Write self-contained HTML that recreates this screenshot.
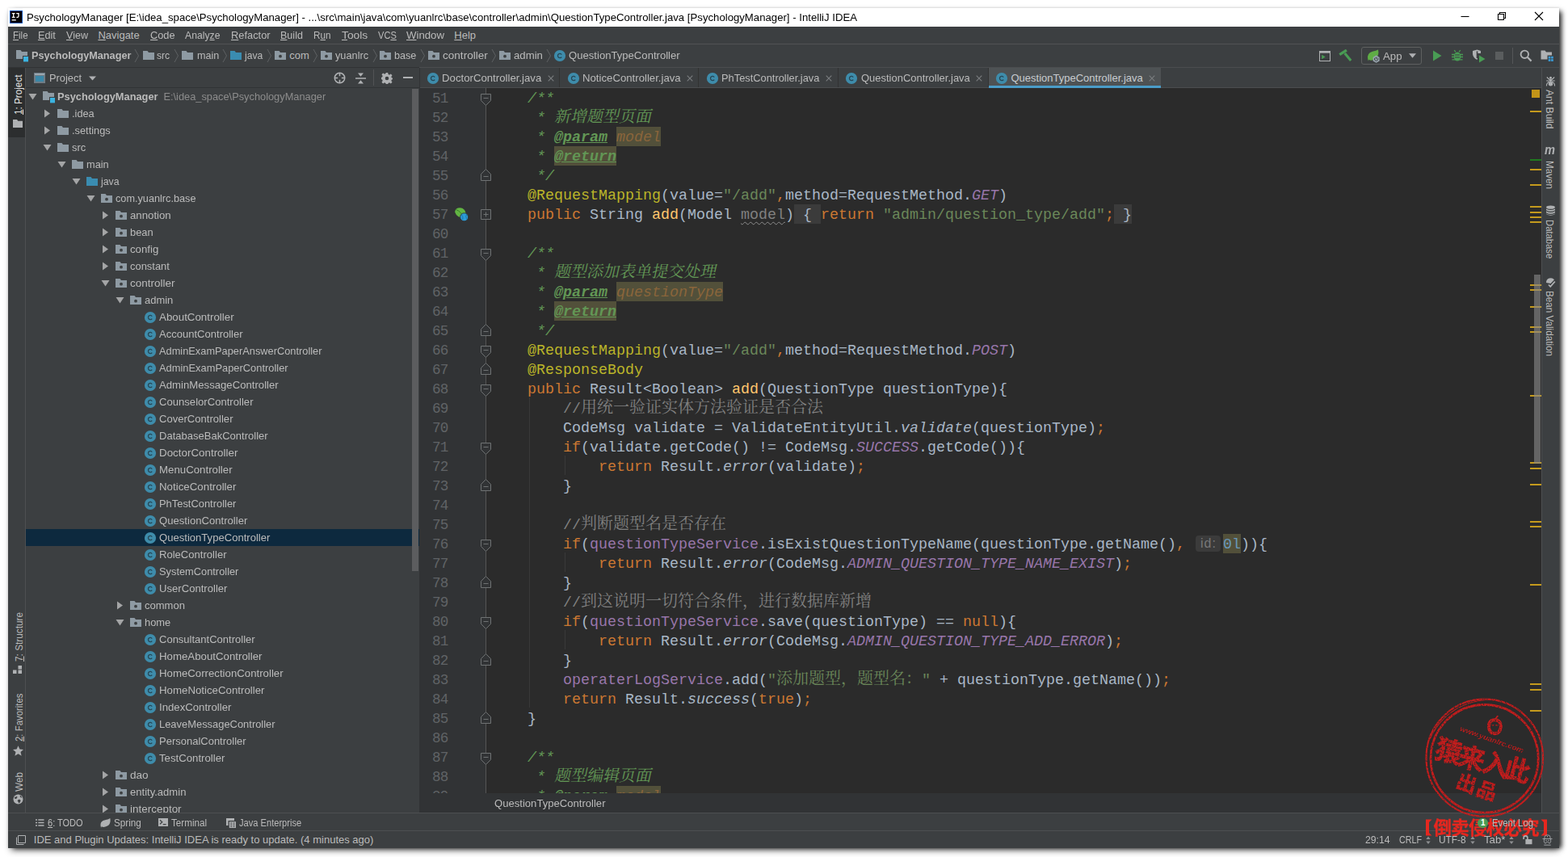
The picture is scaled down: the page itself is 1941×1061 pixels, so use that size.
<!DOCTYPE html>
<html><head><meta charset="utf-8"><title>IntelliJ IDEA</title>
<style>
*{box-sizing:border-box;margin:0;padding:0}
html,body{width:1941px;height:1061px;overflow:hidden;background:#fff}
body{font-family:"Liberation Sans",sans-serif;font-size:13px;color:#BBBBBB;position:relative}
.abs{position:absolute}
.t{position:absolute;white-space:pre;transform-origin:0 50%}
.t u{text-decoration:underline;text-underline-offset:.8px;text-decoration-thickness:1px}
#shadow{position:absolute;left:10px;top:10px;width:1920px;height:1040px;box-shadow:5px 2px 6px -2px rgba(0,0,0,.8),1px 5px 8px -2px rgba(0,0,0,.45),0 0 3px 0 rgba(0,0,0,.12)}
#win{position:absolute;left:10px;top:10px;width:1920px;height:1040px;background:#3C3F41;overflow:hidden}
#pg{position:absolute;left:-10px;top:-10px;width:1941px;height:1061px}
#title{position:absolute;left:10px;top:10px;width:1920px;height:23px;background:#fff}
.hl{position:absolute;height:1px}
.vl{position:absolute;width:1px}
/* project panel */
#tree{position:absolute;left:32px;top:109px;width:487px;height:897px;overflow:hidden}
.tr{position:absolute;left:0;width:487px;height:21px;line-height:21px;white-space:nowrap}
.tr.sel{background:#0D293E}
.tr .arw{position:absolute;top:5px;line-height:0}
.tr .tic{position:absolute;top:3px;line-height:0}
.tr .tl{position:absolute;top:0;font-size:13px;color:#BBBBBB;transform-origin:0 50%}
.tr .tl b{font-weight:bold}
.tr .pth{color:#8C8C8C;margin-left:7px}
/* editor */
#edbg{position:absolute;left:519px;top:109px;width:1389px;height:873px;background:#2B2B2B}
#gutter{position:absolute;left:519px;top:109px;width:83px;height:873px;background:#313335;border-right:1px solid #555555;overflow:hidden}
#code{position:absolute;left:602px;top:109px;width:1292px;height:873px;overflow:hidden}
.cl,.ln{position:absolute;left:0;height:24px;line-height:27.5px;font-family:"Liberation Mono",monospace;font-size:18.333px;white-space:pre}
.ln{font-size:17.6px;letter-spacing:-.7px;line-height:26px}
.cl{left:7px;color:#A9B7C6}
.ln{left:16px;color:#606366}
#folds{position:absolute;left:519px;top:109px;width:100px;height:873px;overflow:hidden}
.fm{position:absolute;left:76px;line-height:0}
.cj{vertical-align:top}
.cj text{font-family:"Liberation Mono","Noto Serif CJK SC",serif;font-size:20px;font-style:normal;letter-spacing:0}
.d{color:#A9B7C6}.k{color:#CC7832}.a{color:#BBB529}.s{color:#6A8759}.f{color:#9876AA;font-style:italic}.fi{color:#9876AA}
.m{color:#FFC66D}.sm{font-style:italic;color:#A9B7C6}.c{color:#808080}.dc{color:#629755;font-style:italic}
.dt{color:#629755;font-style:italic;font-weight:bold;text-decoration:underline}
.dp{color:#8A653B;font-style:italic;background:#52503A;padding:3.2px 0 0}
.hl1{background:#52503A;padding:3.2px 0 0}.hl2{background:#52503A;padding:3.2px 0 0}
.n{color:#6897BB}
.un{color:#808080;text-decoration:underline wavy #8C8C8C 1px;text-underline-offset:3px}
.fo{background:#3B3B3B;color:#A9B7C6;padding:3.2px 0 0}
.hint{display:inline-block;font-family:"Liberation Sans",sans-serif;font-size:16px;color:#787878;background:#3B3B3B;border-radius:4px;height:20px;line-height:20px;width:31px;margin:2px 3px 0 2px;text-align:center;vertical-align:top;letter-spacing:1px;text-indent:1px}
</style></head>
<body>
<div id="shadow"></div>
<div id="win"><div id="pg">
  <div id="title"></div>
  <!-- separators -->
  <div class="hl" style="left:10px;top:54px;width:1920px;background:#515355"></div>
  <div class="hl" style="left:10px;top:83px;width:509px;background:#313335"></div>
  <div class="hl" style="left:519px;top:83px;width:1411px;background:#4B4D4F"></div>
  <div class="hl" style="left:32px;top:108px;width:487px;background:#313335"></div>
  <div class="hl" style="left:519px;top:108px;width:1389px;background:#4B4D4F"></div>
  <div class="hl" style="left:10px;top:1006px;width:1920px;background:#4D4F51"></div>
  <div class="hl" style="left:10px;top:1028px;width:1920px;background:#4D4F51"></div>
  <div class="vl" style="left:31px;top:84px;height:922px;background:#4D4F51"></div>
  <div class="vl" style="left:1908px;top:84px;height:922px;background:#4D4F51"></div>
  <div id="tree">
<div class="tr" style="top:0px"><span class="arw" style="left:2.5px"><svg class="ta" width="11" height="11" viewBox="0 0 11 11"><path d="M0.5 2H10.5L5.5 9.5Z" fill="#A4A5A6"/></svg></span><span class="tic" style="left:20px"><svg class="ti" width="16" height="16" viewBox="0 0 16 16"><path d="M1 1H6.5L8 3H15V8H9V12H1Z" fill="#8E9AA3"/><rect x="10" y="9" width="6.4" height="6.4" fill="#3BB3E0"/></svg></span><span class="tl" style="left:39px;transform:scaleX(0.9850)"><b>PsychologyManager</b><span class="pth">E:\idea_space\PsychologyManager</span></span></div>
<div class="tr" style="top:21px"><span class="arw" style="left:20.5px"><svg class="ta" width="11" height="11" viewBox="0 0 11 11"><path d="M2 0.5L9 5.5L2 10.5Z" fill="#A4A5A6"/></svg></span><span class="tic" style="left:38px"><svg class="ti" width="16" height="16" viewBox="0 0 16 16"><path d="M1 2H6.5L8 4H15V13H1Z" fill="#8E9AA3"/></svg></span><span class="tl" style="left:57px;transform:scaleX(0.9822)">.idea</span></div>
<div class="tr" style="top:42px"><span class="arw" style="left:20.5px"><svg class="ta" width="11" height="11" viewBox="0 0 11 11"><path d="M2 0.5L9 5.5L2 10.5Z" fill="#A4A5A6"/></svg></span><span class="tic" style="left:38px"><svg class="ti" width="16" height="16" viewBox="0 0 16 16"><path d="M1 2H6.5L8 4H15V13H1Z" fill="#8E9AA3"/></svg></span><span class="tl" style="left:57px;transform:scaleX(0.9851)">.settings</span></div>
<div class="tr" style="top:63px"><span class="arw" style="left:20.5px"><svg class="ta" width="11" height="11" viewBox="0 0 11 11"><path d="M0.5 2H10.5L5.5 9.5Z" fill="#A4A5A6"/></svg></span><span class="tic" style="left:38px"><svg class="ti" width="16" height="16" viewBox="0 0 16 16"><path d="M1 2H6.5L8 4H15V13H1Z" fill="#8E9AA3"/></svg></span><span class="tl" style="left:57px;transform:scaleX(0.9917)">src</span></div>
<div class="tr" style="top:84px"><span class="arw" style="left:38.5px"><svg class="ta" width="11" height="11" viewBox="0 0 11 11"><path d="M0.5 2H10.5L5.5 9.5Z" fill="#A4A5A6"/></svg></span><span class="tic" style="left:56px"><svg class="ti" width="16" height="16" viewBox="0 0 16 16"><path d="M1 2H6.5L8 4H15V13H1Z" fill="#8E9AA3"/></svg></span><span class="tl" style="left:75px;transform:scaleX(0.9827)">main</span></div>
<div class="tr" style="top:105px"><span class="arw" style="left:56.5px"><svg class="ta" width="11" height="11" viewBox="0 0 11 11"><path d="M0.5 2H10.5L5.5 9.5Z" fill="#A4A5A6"/></svg></span><span class="tic" style="left:74px"><svg class="ti" width="16" height="16" viewBox="0 0 16 16"><path d="M1 2H6.5L8 4H15V13H1Z" fill="#3A8CB0"/></svg></span><span class="tl" style="left:93px;transform:scaleX(0.9472)">java</span></div>
<div class="tr" style="top:126px"><span class="arw" style="left:74.5px"><svg class="ta" width="11" height="11" viewBox="0 0 11 11"><path d="M0.5 2H10.5L5.5 9.5Z" fill="#A4A5A6"/></svg></span><span class="tic" style="left:92px"><svg class="ti" width="16" height="16" viewBox="0 0 16 16"><path d="M1 2H6.5L8 4H15V13H1Z" fill="#8E9AA3"/><circle cx="8" cy="8.7" r="1.9" fill="#3C3F41"/></svg></span><span class="tl" style="left:111px;transform:scaleX(0.9765)">com.yuanlrc.base</span></div>
<div class="tr" style="top:147px"><span class="arw" style="left:92.5px"><svg class="ta" width="11" height="11" viewBox="0 0 11 11"><path d="M2 0.5L9 5.5L2 10.5Z" fill="#A4A5A6"/></svg></span><span class="tic" style="left:110px"><svg class="ti" width="16" height="16" viewBox="0 0 16 16"><path d="M1 2H6.5L8 4H15V13H1Z" fill="#8E9AA3"/><circle cx="8" cy="8.7" r="1.9" fill="#3C3F41"/></svg></span><span class="tl" style="left:129px;transform:scaleX(1.0162)">annotion</span></div>
<div class="tr" style="top:168px"><span class="arw" style="left:92.5px"><svg class="ta" width="11" height="11" viewBox="0 0 11 11"><path d="M2 0.5L9 5.5L2 10.5Z" fill="#A4A5A6"/></svg></span><span class="tic" style="left:110px"><svg class="ti" width="16" height="16" viewBox="0 0 16 16"><path d="M1 2H6.5L8 4H15V13H1Z" fill="#8E9AA3"/><circle cx="8" cy="8.7" r="1.9" fill="#3C3F41"/></svg></span><span class="tl" style="left:129px;transform:scaleX(0.9923)">bean</span></div>
<div class="tr" style="top:189px"><span class="arw" style="left:92.5px"><svg class="ta" width="11" height="11" viewBox="0 0 11 11"><path d="M2 0.5L9 5.5L2 10.5Z" fill="#A4A5A6"/></svg></span><span class="tic" style="left:110px"><svg class="ti" width="16" height="16" viewBox="0 0 16 16"><path d="M1 2H6.5L8 4H15V13H1Z" fill="#8E9AA3"/><circle cx="8" cy="8.7" r="1.9" fill="#3C3F41"/></svg></span><span class="tl" style="left:129px;transform:scaleX(1.0172)">config</span></div>
<div class="tr" style="top:210px"><span class="arw" style="left:92.5px"><svg class="ta" width="11" height="11" viewBox="0 0 11 11"><path d="M2 0.5L9 5.5L2 10.5Z" fill="#A4A5A6"/></svg></span><span class="tic" style="left:110px"><svg class="ti" width="16" height="16" viewBox="0 0 16 16"><path d="M1 2H6.5L8 4H15V13H1Z" fill="#8E9AA3"/><circle cx="8" cy="8.7" r="1.9" fill="#3C3F41"/></svg></span><span class="tl" style="left:129px;transform:scaleX(0.9948)">constant</span></div>
<div class="tr" style="top:231px"><span class="arw" style="left:92.5px"><svg class="ta" width="11" height="11" viewBox="0 0 11 11"><path d="M0.5 2H10.5L5.5 9.5Z" fill="#A4A5A6"/></svg></span><span class="tic" style="left:110px"><svg class="ti" width="16" height="16" viewBox="0 0 16 16"><path d="M1 2H6.5L8 4H15V13H1Z" fill="#8E9AA3"/><circle cx="8" cy="8.7" r="1.9" fill="#3C3F41"/></svg></span><span class="tl" style="left:129px;transform:scaleX(1.0380)">controller</span></div>
<div class="tr" style="top:252px"><span class="arw" style="left:110.5px"><svg class="ta" width="11" height="11" viewBox="0 0 11 11"><path d="M0.5 2H10.5L5.5 9.5Z" fill="#A4A5A6"/></svg></span><span class="tic" style="left:128px"><svg class="ti" width="16" height="16" viewBox="0 0 16 16"><path d="M1 2H6.5L8 4H15V13H1Z" fill="#8E9AA3"/><circle cx="8" cy="8.7" r="1.9" fill="#3C3F41"/></svg></span><span class="tl" style="left:147px;transform:scaleX(0.9966)">admin</span></div>
<div class="tr" style="top:273px"><span class="tic" style="left:146px"><svg class="ti" width="16" height="16" viewBox="0 0 16 16"><circle cx="8" cy="8" r="7.1" fill="#3E8CAB"/><path d="M10.2 9.5A2.6 2.6 0 1 1 10.2 6.5" fill="none" stroke="#274756" stroke-width="1.3"/></svg></span><span class="tl" style="left:165px;transform:scaleX(1.0252)">AboutController</span></div>
<div class="tr" style="top:294px"><span class="tic" style="left:146px"><svg class="ti" width="16" height="16" viewBox="0 0 16 16"><circle cx="8" cy="8" r="7.1" fill="#3E8CAB"/><path d="M10.2 9.5A2.6 2.6 0 1 1 10.2 6.5" fill="none" stroke="#274756" stroke-width="1.3"/></svg></span><span class="tl" style="left:165px;transform:scaleX(1.0026)">AccountController</span></div>
<div class="tr" style="top:315px"><span class="tic" style="left:146px"><svg class="ti" width="16" height="16" viewBox="0 0 16 16"><circle cx="8" cy="8" r="7.1" fill="#3E8CAB"/><path d="M10.2 9.5A2.6 2.6 0 1 1 10.2 6.5" fill="none" stroke="#274756" stroke-width="1.3"/></svg></span><span class="tl" style="left:165px;transform:scaleX(0.9854)">AdminExamPaperAnswerController</span></div>
<div class="tr" style="top:336px"><span class="tic" style="left:146px"><svg class="ti" width="16" height="16" viewBox="0 0 16 16"><circle cx="8" cy="8" r="7.1" fill="#3E8CAB"/><path d="M10.2 9.5A2.6 2.6 0 1 1 10.2 6.5" fill="none" stroke="#274756" stroke-width="1.3"/></svg></span><span class="tl" style="left:165px;transform:scaleX(0.9905)">AdminExamPaperController</span></div>
<div class="tr" style="top:357px"><span class="tic" style="left:146px"><svg class="ti" width="16" height="16" viewBox="0 0 16 16"><circle cx="8" cy="8" r="7.1" fill="#3E8CAB"/><path d="M10.2 9.5A2.6 2.6 0 1 1 10.2 6.5" fill="none" stroke="#274756" stroke-width="1.3"/></svg></span><span class="tl" style="left:165px;transform:scaleX(1.0120)">AdminMessageController</span></div>
<div class="tr" style="top:378px"><span class="tic" style="left:146px"><svg class="ti" width="16" height="16" viewBox="0 0 16 16"><circle cx="8" cy="8" r="7.1" fill="#3E8CAB"/><path d="M10.2 9.5A2.6 2.6 0 1 1 10.2 6.5" fill="none" stroke="#274756" stroke-width="1.3"/></svg></span><span class="tl" style="left:165px;transform:scaleX(1.0076)">CounselorController</span></div>
<div class="tr" style="top:399px"><span class="tic" style="left:146px"><svg class="ti" width="16" height="16" viewBox="0 0 16 16"><circle cx="8" cy="8" r="7.1" fill="#3E8CAB"/><path d="M10.2 9.5A2.6 2.6 0 1 1 10.2 6.5" fill="none" stroke="#274756" stroke-width="1.3"/></svg></span><span class="tl" style="left:165px;transform:scaleX(1.0050)">CoverController</span></div>
<div class="tr" style="top:420px"><span class="tic" style="left:146px"><svg class="ti" width="16" height="16" viewBox="0 0 16 16"><circle cx="8" cy="8" r="7.1" fill="#3E8CAB"/><path d="M10.2 9.5A2.6 2.6 0 1 1 10.2 6.5" fill="none" stroke="#274756" stroke-width="1.3"/></svg></span><span class="tl" style="left:165px;transform:scaleX(1.0014)">DatabaseBakController</span></div>
<div class="tr" style="top:441px"><span class="tic" style="left:146px"><svg class="ti" width="16" height="16" viewBox="0 0 16 16"><circle cx="8" cy="8" r="7.1" fill="#3E8CAB"/><path d="M10.2 9.5A2.6 2.6 0 1 1 10.2 6.5" fill="none" stroke="#274756" stroke-width="1.3"/></svg></span><span class="tl" style="left:165px;transform:scaleX(1.0290)">DoctorController</span></div>
<div class="tr" style="top:462px"><span class="tic" style="left:146px"><svg class="ti" width="16" height="16" viewBox="0 0 16 16"><circle cx="8" cy="8" r="7.1" fill="#3E8CAB"/><path d="M10.2 9.5A2.6 2.6 0 1 1 10.2 6.5" fill="none" stroke="#274756" stroke-width="1.3"/></svg></span><span class="tl" style="left:165px;transform:scaleX(1.0194)">MenuController</span></div>
<div class="tr" style="top:483px"><span class="tic" style="left:146px"><svg class="ti" width="16" height="16" viewBox="0 0 16 16"><circle cx="8" cy="8" r="7.1" fill="#3E8CAB"/><path d="M10.2 9.5A2.6 2.6 0 1 1 10.2 6.5" fill="none" stroke="#274756" stroke-width="1.3"/></svg></span><span class="tl" style="left:165px;transform:scaleX(1.0236)">NoticeController</span></div>
<div class="tr" style="top:504px"><span class="tic" style="left:146px"><svg class="ti" width="16" height="16" viewBox="0 0 16 16"><circle cx="8" cy="8" r="7.1" fill="#3E8CAB"/><path d="M10.2 9.5A2.6 2.6 0 1 1 10.2 6.5" fill="none" stroke="#274756" stroke-width="1.3"/></svg></span><span class="tl" style="left:165px;transform:scaleX(0.9926)">PhTestController</span></div>
<div class="tr" style="top:525px"><span class="tic" style="left:146px"><svg class="ti" width="16" height="16" viewBox="0 0 16 16"><circle cx="8" cy="8" r="7.1" fill="#3E8CAB"/><path d="M10.2 9.5A2.6 2.6 0 1 1 10.2 6.5" fill="none" stroke="#274756" stroke-width="1.3"/></svg></span><span class="tl" style="left:165px;transform:scaleX(1.0084)">QuestionController</span></div>
<div class="tr sel" style="top:546px"><span class="tic" style="left:146px"><svg class="ti" width="16" height="16" viewBox="0 0 16 16"><circle cx="8" cy="8" r="7.1" fill="#3E8CAB"/><path d="M10.2 9.5A2.6 2.6 0 1 1 10.2 6.5" fill="none" stroke="#274756" stroke-width="1.3"/></svg></span><span class="tl" style="left:165px;transform:scaleX(1.0060)">QuestionTypeController</span></div>
<div class="tr" style="top:567px"><span class="tic" style="left:146px"><svg class="ti" width="16" height="16" viewBox="0 0 16 16"><circle cx="8" cy="8" r="7.1" fill="#3E8CAB"/><path d="M10.2 9.5A2.6 2.6 0 1 1 10.2 6.5" fill="none" stroke="#274756" stroke-width="1.3"/></svg></span><span class="tl" style="left:165px;transform:scaleX(1.0049)">RoleController</span></div>
<div class="tr" style="top:588px"><span class="tic" style="left:146px"><svg class="ti" width="16" height="16" viewBox="0 0 16 16"><circle cx="8" cy="8" r="7.1" fill="#3E8CAB"/><path d="M10.2 9.5A2.6 2.6 0 1 1 10.2 6.5" fill="none" stroke="#274756" stroke-width="1.3"/></svg></span><span class="tl" style="left:165px;transform:scaleX(0.9869)">SystemController</span></div>
<div class="tr" style="top:609px"><span class="tic" style="left:146px"><svg class="ti" width="16" height="16" viewBox="0 0 16 16"><circle cx="8" cy="8" r="7.1" fill="#3E8CAB"/><path d="M10.2 9.5A2.6 2.6 0 1 1 10.2 6.5" fill="none" stroke="#274756" stroke-width="1.3"/></svg></span><span class="tl" style="left:165px;transform:scaleX(1.0082)">UserController</span></div>
<div class="tr" style="top:630px"><span class="arw" style="left:110.5px"><svg class="ta" width="11" height="11" viewBox="0 0 11 11"><path d="M2 0.5L9 5.5L2 10.5Z" fill="#A4A5A6"/></svg></span><span class="tic" style="left:128px"><svg class="ti" width="16" height="16" viewBox="0 0 16 16"><path d="M1 2H6.5L8 4H15V13H1Z" fill="#8E9AA3"/><circle cx="8" cy="8.7" r="1.9" fill="#3C3F41"/></svg></span><span class="tl" style="left:147px;transform:scaleX(1.0008)">common</span></div>
<div class="tr" style="top:651px"><span class="arw" style="left:110.5px"><svg class="ta" width="11" height="11" viewBox="0 0 11 11"><path d="M0.5 2H10.5L5.5 9.5Z" fill="#A4A5A6"/></svg></span><span class="tic" style="left:128px"><svg class="ti" width="16" height="16" viewBox="0 0 16 16"><path d="M1 2H6.5L8 4H15V13H1Z" fill="#8E9AA3"/><circle cx="8" cy="8.7" r="1.9" fill="#3C3F41"/></svg></span><span class="tl" style="left:147px;transform:scaleX(0.9898)">home</span></div>
<div class="tr" style="top:672px"><span class="tic" style="left:146px"><svg class="ti" width="16" height="16" viewBox="0 0 16 16"><circle cx="8" cy="8" r="7.1" fill="#3E8CAB"/><path d="M10.2 9.5A2.6 2.6 0 1 1 10.2 6.5" fill="none" stroke="#274756" stroke-width="1.3"/></svg></span><span class="tl" style="left:165px;transform:scaleX(1.0007)">ConsultantController</span></div>
<div class="tr" style="top:693px"><span class="tic" style="left:146px"><svg class="ti" width="16" height="16" viewBox="0 0 16 16"><circle cx="8" cy="8" r="7.1" fill="#3E8CAB"/><path d="M10.2 9.5A2.6 2.6 0 1 1 10.2 6.5" fill="none" stroke="#274756" stroke-width="1.3"/></svg></span><span class="tl" style="left:165px;transform:scaleX(1.0199)">HomeAboutController</span></div>
<div class="tr" style="top:714px"><span class="tic" style="left:146px"><svg class="ti" width="16" height="16" viewBox="0 0 16 16"><circle cx="8" cy="8" r="7.1" fill="#3E8CAB"/><path d="M10.2 9.5A2.6 2.6 0 1 1 10.2 6.5" fill="none" stroke="#274756" stroke-width="1.3"/></svg></span><span class="tl" style="left:165px;transform:scaleX(1.0172)">HomeCorrectionController</span></div>
<div class="tr" style="top:735px"><span class="tic" style="left:146px"><svg class="ti" width="16" height="16" viewBox="0 0 16 16"><circle cx="8" cy="8" r="7.1" fill="#3E8CAB"/><path d="M10.2 9.5A2.6 2.6 0 1 1 10.2 6.5" fill="none" stroke="#274756" stroke-width="1.3"/></svg></span><span class="tl" style="left:165px;transform:scaleX(1.0204)">HomeNoticeController</span></div>
<div class="tr" style="top:756px"><span class="tic" style="left:146px"><svg class="ti" width="16" height="16" viewBox="0 0 16 16"><circle cx="8" cy="8" r="7.1" fill="#3E8CAB"/><path d="M10.2 9.5A2.6 2.6 0 1 1 10.2 6.5" fill="none" stroke="#274756" stroke-width="1.3"/></svg></span><span class="tl" style="left:165px;transform:scaleX(1.0141)">IndexController</span></div>
<div class="tr" style="top:777px"><span class="tic" style="left:146px"><svg class="ti" width="16" height="16" viewBox="0 0 16 16"><circle cx="8" cy="8" r="7.1" fill="#3E8CAB"/><path d="M10.2 9.5A2.6 2.6 0 1 1 10.2 6.5" fill="none" stroke="#274756" stroke-width="1.3"/></svg></span><span class="tl" style="left:165px;transform:scaleX(0.9936)">LeaveMessageController</span></div>
<div class="tr" style="top:798px"><span class="tic" style="left:146px"><svg class="ti" width="16" height="16" viewBox="0 0 16 16"><circle cx="8" cy="8" r="7.1" fill="#3E8CAB"/><path d="M10.2 9.5A2.6 2.6 0 1 1 10.2 6.5" fill="none" stroke="#274756" stroke-width="1.3"/></svg></span><span class="tl" style="left:165px;transform:scaleX(0.9993)">PersonalController</span></div>
<div class="tr" style="top:819px"><span class="tic" style="left:146px"><svg class="ti" width="16" height="16" viewBox="0 0 16 16"><circle cx="8" cy="8" r="7.1" fill="#3E8CAB"/><path d="M10.2 9.5A2.6 2.6 0 1 1 10.2 6.5" fill="none" stroke="#274756" stroke-width="1.3"/></svg></span><span class="tl" style="left:165px;transform:scaleX(1.0149)">TestController</span></div>
<div class="tr" style="top:840px"><span class="arw" style="left:92.5px"><svg class="ta" width="11" height="11" viewBox="0 0 11 11"><path d="M2 0.5L9 5.5L2 10.5Z" fill="#A4A5A6"/></svg></span><span class="tic" style="left:110px"><svg class="ti" width="16" height="16" viewBox="0 0 16 16"><path d="M1 2H6.5L8 4H15V13H1Z" fill="#8E9AA3"/><circle cx="8" cy="8.7" r="1.9" fill="#3C3F41"/></svg></span><span class="tl" style="left:129px;transform:scaleX(1.0459)">dao</span></div>
<div class="tr" style="top:861px"><span class="arw" style="left:92.5px"><svg class="ta" width="11" height="11" viewBox="0 0 11 11"><path d="M2 0.5L9 5.5L2 10.5Z" fill="#A4A5A6"/></svg></span><span class="tic" style="left:110px"><svg class="ti" width="16" height="16" viewBox="0 0 16 16"><path d="M1 2H6.5L8 4H15V13H1Z" fill="#8E9AA3"/><circle cx="8" cy="8.7" r="1.9" fill="#3C3F41"/></svg></span><span class="tl" style="left:129px;transform:scaleX(1.0038)">entity.admin</span></div>
<div class="tr" style="top:882px"><span class="arw" style="left:92.5px"><svg class="ta" width="11" height="11" viewBox="0 0 11 11"><path d="M2 0.5L9 5.5L2 10.5Z" fill="#A4A5A6"/></svg></span><span class="tic" style="left:110px"><svg class="ti" width="16" height="16" viewBox="0 0 16 16"><path d="M1 2H6.5L8 4H15V13H1Z" fill="#8E9AA3"/><circle cx="8" cy="8.7" r="1.9" fill="#3C3F41"/></svg></span><span class="tl" style="left:129px;transform:scaleX(1.0355)">interceptor</span></div>
  </div>
  <div class="abs" style="left:510px;top:110px;width:8px;height:597px;background:#5C5D5F"></div>
  <div id="edbg"></div>
  <div class="vl" style="left:519px;top:84px;height:25px;background:#313335"></div>
  <div id="gutter">
<div class="ln" style="top:0px">51</div>
<div class="ln" style="top:24px">52</div>
<div class="ln" style="top:48px">53</div>
<div class="ln" style="top:72px">54</div>
<div class="ln" style="top:96px">55</div>
<div class="ln" style="top:120px">56</div>
<div class="ln" style="top:144px">57</div>
<div class="ln" style="top:168px">60</div>
<div class="ln" style="top:192px">61</div>
<div class="ln" style="top:216px">62</div>
<div class="ln" style="top:240px">63</div>
<div class="ln" style="top:264px">64</div>
<div class="ln" style="top:288px">65</div>
<div class="ln" style="top:312px">66</div>
<div class="ln" style="top:336px">67</div>
<div class="ln" style="top:360px">68</div>
<div class="ln" style="top:384px">69</div>
<div class="ln" style="top:408px">70</div>
<div class="ln" style="top:432px">71</div>
<div class="ln" style="top:456px">72</div>
<div class="ln" style="top:480px">73</div>
<div class="ln" style="top:504px">74</div>
<div class="ln" style="top:528px">75</div>
<div class="ln" style="top:552px">76</div>
<div class="ln" style="top:576px">77</div>
<div class="ln" style="top:600px">78</div>
<div class="ln" style="top:624px">79</div>
<div class="ln" style="top:648px">80</div>
<div class="ln" style="top:672px">81</div>
<div class="ln" style="top:696px">82</div>
<div class="ln" style="top:720px">83</div>
<div class="ln" style="top:744px">84</div>
<div class="ln" style="top:768px">85</div>
<div class="ln" style="top:792px">86</div>
<div class="ln" style="top:816px">87</div>
<div class="ln" style="top:840px">88</div>
<div class="ln" style="top:864px">89</div>
<svg class="abs" style="left:43px;top:147px" width="19" height="19" viewBox="0 0 19 19"><path d="M1.2 6.2Q1.5 1.2 7.5 1.2Q13.6 1.6 14.6 8Q14.8 12.5 10.5 13Q3 13.5 1.2 6.2Z" fill="#62B543"/><path d="M2.5 3.5Q8.5 5.5 11.5 12.8" stroke="#3A7A2A" stroke-width="1" fill="none"/><circle cx="12.6" cy="12.8" r="5" fill="#2B9CD8" stroke="#313335" stroke-width=".9"/><path d="M9.4 9.8Q11.6 12 10.8 16M15.6 9.2Q13.6 12.2 16.2 15.6" stroke="#1D6FA0" stroke-width=".9" fill="none"/></svg>
  </div>
  <div id="folds">
<div class="fm" style="top:6.5px"><svg width="13" height="15" viewBox="0 0 13 15"><path d="M0.5 0.5H12.5V8.5L6.5 14.5L0.5 8.5Z" fill="#313335" stroke="#6F7273"/><path d="M3.5 5.5H9.5" stroke="#6F7273"/></svg></div>
<div class="fm" style="top:100px"><svg width="13" height="15" viewBox="0 0 13 15"><path d="M0.5 14.5H12.5V6.5L6.5 0.5L0.5 6.5Z" fill="#313335" stroke="#6F7273"/><path d="M3.5 9.5H9.5" stroke="#6F7273"/></svg></div>
<div class="fm" style="top:150px"><svg width="13" height="13" viewBox="0 0 13 13"><path d="M0.5 0.5H12.5V12.5H0.5Z" fill="#313335" stroke="#6F7273"/><path d="M3.5 6.5H9.5M6.5 3.5V9.5" stroke="#6F7273"/></svg></div>
<div class="fm" style="top:198.5px"><svg width="13" height="15" viewBox="0 0 13 15"><path d="M0.5 0.5H12.5V8.5L6.5 14.5L0.5 8.5Z" fill="#313335" stroke="#6F7273"/><path d="M3.5 5.5H9.5" stroke="#6F7273"/></svg></div>
<div class="fm" style="top:292px"><svg width="13" height="15" viewBox="0 0 13 15"><path d="M0.5 14.5H12.5V6.5L6.5 0.5L0.5 6.5Z" fill="#313335" stroke="#6F7273"/><path d="M3.5 9.5H9.5" stroke="#6F7273"/></svg></div>
<div class="fm" style="top:318.5px"><svg width="13" height="15" viewBox="0 0 13 15"><path d="M0.5 0.5H12.5V8.5L6.5 14.5L0.5 8.5Z" fill="#313335" stroke="#6F7273"/><path d="M3.5 5.5H9.5" stroke="#6F7273"/></svg></div>
<div class="fm" style="top:340px"><svg width="13" height="15" viewBox="0 0 13 15"><path d="M0.5 14.5H12.5V6.5L6.5 0.5L0.5 6.5Z" fill="#313335" stroke="#6F7273"/><path d="M3.5 9.5H9.5" stroke="#6F7273"/></svg></div>
<div class="fm" style="top:366.5px"><svg width="13" height="15" viewBox="0 0 13 15"><path d="M0.5 0.5H12.5V8.5L6.5 14.5L0.5 8.5Z" fill="#313335" stroke="#6F7273"/><path d="M3.5 5.5H9.5" stroke="#6F7273"/></svg></div>
<div class="fm" style="top:438.5px"><svg width="13" height="15" viewBox="0 0 13 15"><path d="M0.5 0.5H12.5V8.5L6.5 14.5L0.5 8.5Z" fill="#313335" stroke="#6F7273"/><path d="M3.5 5.5H9.5" stroke="#6F7273"/></svg></div>
<div class="fm" style="top:484px"><svg width="13" height="15" viewBox="0 0 13 15"><path d="M0.5 14.5H12.5V6.5L6.5 0.5L0.5 6.5Z" fill="#313335" stroke="#6F7273"/><path d="M3.5 9.5H9.5" stroke="#6F7273"/></svg></div>
<div class="fm" style="top:558.5px"><svg width="13" height="15" viewBox="0 0 13 15"><path d="M0.5 0.5H12.5V8.5L6.5 14.5L0.5 8.5Z" fill="#313335" stroke="#6F7273"/><path d="M3.5 5.5H9.5" stroke="#6F7273"/></svg></div>
<div class="fm" style="top:604px"><svg width="13" height="15" viewBox="0 0 13 15"><path d="M0.5 14.5H12.5V6.5L6.5 0.5L0.5 6.5Z" fill="#313335" stroke="#6F7273"/><path d="M3.5 9.5H9.5" stroke="#6F7273"/></svg></div>
<div class="fm" style="top:654.5px"><svg width="13" height="15" viewBox="0 0 13 15"><path d="M0.5 0.5H12.5V8.5L6.5 14.5L0.5 8.5Z" fill="#313335" stroke="#6F7273"/><path d="M3.5 5.5H9.5" stroke="#6F7273"/></svg></div>
<div class="fm" style="top:700px"><svg width="13" height="15" viewBox="0 0 13 15"><path d="M0.5 14.5H12.5V6.5L6.5 0.5L0.5 6.5Z" fill="#313335" stroke="#6F7273"/><path d="M3.5 9.5H9.5" stroke="#6F7273"/></svg></div>
<div class="fm" style="top:772px"><svg width="13" height="15" viewBox="0 0 13 15"><path d="M0.5 14.5H12.5V6.5L6.5 0.5L0.5 6.5Z" fill="#313335" stroke="#6F7273"/><path d="M3.5 9.5H9.5" stroke="#6F7273"/></svg></div>
<div class="fm" style="top:822.5px"><svg width="13" height="15" viewBox="0 0 13 15"><path d="M0.5 0.5H12.5V8.5L6.5 14.5L0.5 8.5Z" fill="#313335" stroke="#6F7273"/><path d="M3.5 5.5H9.5" stroke="#6F7273"/></svg></div>
  </div>
  <div id="code">
<div class="vl" style="left:53px;top:383px;height:384px;background:#393939"></div>
<div class="vl" style="left:97px;top:455px;height:24px;background:#393939"></div>
<div class="vl" style="left:97px;top:575px;height:24px;background:#393939"></div>
<div class="vl" style="left:97px;top:671px;height:24px;background:#393939"></div>
<div class="cl" style="top:0px"><span class="dc">    /**</span></div>
<div class="cl" style="top:24px"><span class="dc">     * </span><svg class="cj" width="126" height="24" style="margin-right:-6px" viewBox="0 0 126 24"><g fill="#629755" transform="skewX(-12) translate(4,0)"><text x="0" y="18.4">新增题型页面</text></g></svg></div>
<div class="cl" style="top:48px"><span class="dc">     * </span><span class="dt">@param</span><span class="dc"> </span><span class="dp">model</span></div>
<div class="cl" style="top:72px"><span class="dc">     * </span><span class="dt hl1">@return</span></div>
<div class="cl" style="top:96px"><span class="dc">     */</span></div>
<div class="cl" style="top:120px">    <span class="a">@RequestMapping</span><span class="d">(value=</span><span class="s">&quot;/add&quot;</span><span class="k">,</span><span class="d">method=RequestMethod.</span><span class="f">GET</span><span class="d">)</span></div>
<div class="cl" style="top:144px">    <span class="k">public </span><span class="d">String </span><span class="m">add</span><span class="d">(Model </span><span class="un">model</span><span class="d">)</span><span class="fo"> { </span><span class="k">return </span><span class="s">&quot;admin/question_type/add&quot;</span><span class="k">;</span><span class="fo"> }</span></div>
<div class="cl" style="top:168px"></div>
<div class="cl" style="top:192px"><span class="dc">    /**</span></div>
<div class="cl" style="top:216px"><span class="dc">     * </span><svg class="cj" width="206" height="24" style="margin-right:-6px" viewBox="0 0 206 24"><g fill="#629755" transform="skewX(-12) translate(4,0)"><text x="0" y="18.4">题型添加表单提交处理</text></g></svg></div>
<div class="cl" style="top:240px"><span class="dc">     * </span><span class="dt">@param</span><span class="dc"> </span><span class="dp">questionType</span></div>
<div class="cl" style="top:264px"><span class="dc">     * </span><span class="dt hl1">@return</span></div>
<div class="cl" style="top:288px"><span class="dc">     */</span></div>
<div class="cl" style="top:312px">    <span class="a">@RequestMapping</span><span class="d">(value=</span><span class="s">&quot;/add&quot;</span><span class="k">,</span><span class="d">method=RequestMethod.</span><span class="f">POST</span><span class="d">)</span></div>
<div class="cl" style="top:336px">    <span class="a">@ResponseBody</span></div>
<div class="cl" style="top:360px">    <span class="k">public </span><span class="d">Result&lt;Boolean&gt; </span><span class="m">add</span><span class="d">(QuestionType questionType){</span></div>
<div class="cl" style="top:384px">        <span class="c">//</span><svg class="cj" width="300" height="24" style="margin-right:-0px" viewBox="0 0 300 24"><g fill="#808080"><text x="0" y="18.4">用统一验证实体方法验证是否合法</text></g></svg></div>
<div class="cl" style="top:408px">        <span class="d">CodeMsg validate = ValidateEntityUtil.</span><span class="sm">validate</span><span class="d">(questionType)</span><span class="k">;</span></div>
<div class="cl" style="top:432px">        <span class="k">if</span><span class="d">(validate.getCode() != CodeMsg.</span><span class="f">SUCCESS</span><span class="d">.getCode()){</span></div>
<div class="cl" style="top:456px">            <span class="k">return </span><span class="d">Result.</span><span class="sm">error</span><span class="d">(validate)</span><span class="k">;</span></div>
<div class="cl" style="top:480px">        <span class="d">}</span></div>
<div class="cl" style="top:504px"></div>
<div class="cl" style="top:528px">        <span class="c">//</span><svg class="cj" width="180" height="24" style="margin-right:-0px" viewBox="0 0 180 24"><g fill="#808080"><text x="0" y="18.4">判断题型名是否存在</text></g></svg></div>
<div class="cl" style="top:552px">        <span class="k">if</span><span class="d">(</span><span class="fi">questionTypeService</span><span class="d">.isExistQuestionTypeName(questionType.getName()</span><span class="k">,</span> <span class="hint">id:</span><span class="n hl2">0l</span><span class="d">)){</span></div>
<div class="cl" style="top:576px">            <span class="k">return </span><span class="d">Result.</span><span class="sm">error</span><span class="d">(CodeMsg.</span><span class="f">ADMIN_QUESTION_TYPE_NAME_EXIST</span><span class="d">)</span><span class="k">;</span></div>
<div class="cl" style="top:600px">        <span class="d">}</span></div>
<div class="cl" style="top:624px">        <span class="c">//</span><svg class="cj" width="360" height="24" style="margin-right:-0px" viewBox="0 0 360 24"><g fill="#808080"><text x="0" y="18.4">到这说明一切符合条件，进行数据库新增</text></g></svg></div>
<div class="cl" style="top:648px">        <span class="k">if</span><span class="d">(</span><span class="fi">questionTypeService</span><span class="d">.save(questionType) == </span><span class="k">null</span><span class="d">){</span></div>
<div class="cl" style="top:672px">            <span class="k">return </span><span class="d">Result.</span><span class="sm">error</span><span class="d">(CodeMsg.</span><span class="f">ADMIN_QUESTION_TYPE_ADD_ERROR</span><span class="d">)</span><span class="k">;</span></div>
<div class="cl" style="top:696px">        <span class="d">}</span></div>
<div class="cl" style="top:720px">        <span class="fi">operaterLogService</span><span class="d">.add(</span><span class="s">&quot;</span><svg class="cj" width="180" height="24" style="margin-right:-0px" viewBox="0 0 180 24"><g fill="#6A8759"><text x="0" y="18.4">添加题型，题型名：</text></g></svg><span class="s">&quot;</span><span class="d"> + questionType.getName())</span><span class="k">;</span></div>
<div class="cl" style="top:744px">        <span class="k">return </span><span class="d">Result.</span><span class="sm">success</span><span class="d">(</span><span class="k">true</span><span class="d">)</span><span class="k">;</span></div>
<div class="cl" style="top:768px">    <span class="d">}</span></div>
<div class="cl" style="top:792px"></div>
<div class="cl" style="top:816px"><span class="dc">    /**</span></div>
<div class="cl" style="top:840px"><span class="dc">     * </span><svg class="cj" width="126" height="24" style="margin-right:-6px" viewBox="0 0 126 24"><g fill="#629755" transform="skewX(-12) translate(4,0)"><text x="0" y="18.4">题型编辑页面</text></g></svg></div>
<div class="cl" style="top:864px"><span class="dc">     * </span><span class="dt">@param</span><span class="dc"> </span><span class="dp">model</span></div>
  </div>
  <div id="stripe"><div class="abs" style="left:1896px;top:111px;width:10px;height:10px;background:#C39519"></div>
<div class="abs" style="left:1894px;top:137px;width:14px;height:2px;background:#C49A1D"></div>
<div class="abs" style="left:1894px;top:209px;width:14px;height:2px;background:#C49A1D"></div>
<div class="abs" style="left:1894px;top:228px;width:14px;height:2px;background:#C49A1D"></div>
<div class="abs" style="left:1894px;top:254.5px;width:14px;height:2px;background:#C49A1D"></div>
<div class="abs" style="left:1894px;top:261.5px;width:14px;height:2px;background:#C49A1D"></div>
<div class="abs" style="left:1894px;top:267.5px;width:14px;height:2px;background:#C49A1D"></div>
<div class="abs" style="left:1894px;top:274px;width:14px;height:2px;background:#C49A1D"></div>
<div class="abs" style="left:1894px;top:352px;width:14px;height:2px;background:#C49A1D"></div>
<div class="abs" style="left:1894px;top:358px;width:14px;height:2px;background:#C49A1D"></div>
<div class="abs" style="left:1894px;top:378.5px;width:14px;height:2px;background:#C49A1D"></div>
<div class="abs" style="left:1894px;top:404px;width:14px;height:2px;background:#C49A1D"></div>
<div class="abs" style="left:1894px;top:410px;width:14px;height:2px;background:#C49A1D"></div>
<div class="abs" style="left:1894px;top:488.5px;width:14px;height:2px;background:#C49A1D"></div>
<div class="abs" style="left:1894px;top:572px;width:14px;height:2px;background:#C49A1D"></div>
<div class="abs" style="left:1894px;top:579px;width:14px;height:2px;background:#C49A1D"></div>
<div class="abs" style="left:1894px;top:598.5px;width:14px;height:2px;background:#C49A1D"></div>
<div class="abs" style="left:1894px;top:644.5px;width:14px;height:2px;background:#C49A1D"></div>
<div class="abs" style="left:1894px;top:650.5px;width:14px;height:2px;background:#C49A1D"></div>
<div class="abs" style="left:1894px;top:722.5px;width:14px;height:2px;background:#C49A1D"></div>
<div class="abs" style="left:1894px;top:845.5px;width:14px;height:2px;background:#C49A1D"></div>
<div class="abs" style="left:1894px;top:852.5px;width:14px;height:2px;background:#C49A1D"></div>
<div class="abs" style="left:1894px;top:878.5px;width:14px;height:2px;background:#C49A1D"></div>
<div class="abs" style="left:1894px;top:196.5px;width:14px;height:2px;background:#1F7A1F"></div>
<div class="abs" style="left:1898.5px;top:340px;width:8.5px;height:234px;background:rgba(135,135,135,.62)"></div></div>
  <div class="abs" style="left:519px;top:982px;width:1389px;height:24px;background:#313335"></div>
<svg class="abs" style="left:0;top:0" width="1941" height="1061" viewBox="0 0 1941 1061"><defs><filter id="rough" x="-5%" y="-5%" width="110%" height="110%"><feTurbulence type="fractalNoise" baseFrequency="0.55" numOctaves="2" seed="3" result="n"/><feColorMatrix in="n" type="matrix" values="0 0 0 0 0  0 0 0 0 0  0 0 0 0 0  0 0 0 -3.4 2.75" result="m"/><feComposite in="SourceGraphic" in2="m" operator="in"/></filter></defs><g filter="url(#rough)" opacity=".92"><g fill="none" stroke="#CF1B1B"><ellipse cx="1837.8" cy="938.2" rx="72.3" ry="72.5" stroke-width="2.2"/><ellipse cx="1837.6" cy="939.3" rx="66.6" ry="66.8" stroke-width="2.8"/><path d="M1770 915Q1790 872 1838 866.5" stroke-width="1.2"/></g><g fill="#CF1B1B" stroke="#CF1B1B" stroke-width="22" stroke-linejoin="round"><g font-family="Liberation Sans, Noto Sans CJK SC, sans-serif" font-weight="bold" text-anchor="middle" font-size="33" stroke-width="0.7"><text transform="translate(1793.5,929.5) rotate(15)" x="0" y="12.5">猿</text><text transform="translate(1822,938.5) rotate(15)" x="0" y="12.5">来</text><text transform="translate(1852,946) rotate(15)" x="0" y="12.5">入</text><text transform="translate(1878.5,953) rotate(15)" x="0" y="12.5">此</text></g><g font-family="Liberation Sans, Noto Sans CJK SC, sans-serif" font-weight="bold" text-anchor="middle" font-size="25" stroke-width="0.55"><text transform="translate(1815.5,969.5) rotate(18)" x="0" y="9.5">出</text><text transform="translate(1840.5,978.5) rotate(18)" x="0" y="9.5">品</text></g><text x="0" y="0" transform="translate(1806.5,904.5) rotate(19.4)" font-family="Liberation Sans, sans-serif" font-size="8.6" font-weight="bold" font-style="italic" stroke="none" textLength="83" lengthAdjust="spacingAndGlyphs">www.yuanlrc.com</text><g stroke="none"><path fill-rule="evenodd" d="M1850.3 889.2C1843.6 889.2 1841 893.8 1841 899C1841 905.8 1844.6 910.2 1850.3 910.2C1856 910.2 1859.8 905.8 1859.8 899C1859.8 893.8 1857 889.2 1850.3 889.2ZM1850.3 893.2C1854 893.2 1855.8 895.8 1855.8 899C1855.8 903 1853.8 906.2 1850.3 906.2C1846.8 906.2 1845 903 1845 899C1845 895.8 1846.6 893.2 1850.3 893.2Z"/><path d="M1850.6 891Q1851.5 887 1853.8 885.6L1855 886.8Q1852.6 888.6 1852.2 891Z"/><path d="M1846.5 897.2H1849.3V898.4H1846.5ZM1851.3 897.2H1854.1V898.4H1851.3Z"/></g></g></g><g fill="#F0261E" opacity=".95"><path d="M1765 1014.5H1772.5L1769 1018V1031L1772.5 1034.5H1765Z M1915 1014.5H1907.5L1911 1018V1031L1907.5 1034.5H1915Z"/><g stroke="#F0261E" stroke-width="0.3" font-family="Liberation Sans, Noto Sans CJK SC, sans-serif" font-weight="bold" font-size="22.5" text-anchor="middle"><text x="1785.85" y="1033">倒</text><text x="1807.55" y="1033">卖</text><text x="1829.25" y="1033">侵</text><text x="1850.95" y="1033">权</text><text x="1872.65" y="1033">必</text><text x="1894.35" y="1033">究</text></g></g></svg>
<svg class="abs" style="left:12px;top:13px;" width="16" height="16" viewBox="0 0 16 16"><rect x="0" y="0" width="16" height="16" fill="#0A64D8"/><rect x="0.8" y="0.8" width="14.4" height="14.4" fill="#000"/><path d="M2.8 3.6H6.6M4.7 3.6V8.4M2.8 8.4H6.6M8.2 3.6H11V7Q11 8.5 9.4 8.5H8.4" fill="none" stroke="#fff" stroke-width="1.3"/><rect x="2.6" y="11.2" width="5.2" height="1.3" fill="#fff"/></svg>
<span class="t" style="left:33px;top:14.0px;font-size:13px;line-height:16px;color:#000;transform:scaleX(1.0133);">PsychologyManager [E:\idea_space\PsychologyManager] - ...\src\main\java\com\yuanlrc\base\controller\admin\QuestionTypeController.java [PsychologyManager] - IntelliJ IDEA</span>
<svg class="abs" style="left:1808px;top:19px;" width="12" height="3" viewBox="0 0 12 3"><path d="M0.5 1.5H10.5" stroke="#000" stroke-width="1.1"/></svg>
<svg class="abs" style="left:1853px;top:14px;" width="12" height="12" viewBox="0 0 12 12"><path d="M1.5 3.5H8.5V10.5H1.5Z M3.5 3.5V1.5H10.5V8.5H8.5" fill="none" stroke="#000" stroke-width="1.1"/></svg>
<svg class="abs" style="left:1899px;top:14px;" width="12" height="12" viewBox="0 0 12 12"><path d="M1 1L11 11M11 1L1 11" stroke="#000" stroke-width="1.1"/></svg>
<span class="t" style="left:16.2px;top:35.5px;font-size:13px;line-height:16px;color:#BBBBBB;transform:scaleX(0.8877);"><u>F</u>ile</span>
<span class="t" style="left:47px;top:35.5px;font-size:13px;line-height:16px;color:#BBBBBB;transform:scaleX(0.9774);"><u>E</u>dit</span>
<span class="t" style="left:82px;top:35.5px;font-size:13px;line-height:16px;color:#BBBBBB;transform:scaleX(0.9659);"><u>V</u>iew</span>
<span class="t" style="left:121.4px;top:35.5px;font-size:13px;line-height:16px;color:#BBBBBB;"><u>N</u>avigate</span>
<span class="t" style="left:186.1px;top:35.5px;font-size:13px;line-height:16px;color:#BBBBBB;transform:scaleX(0.9846);"><u>C</u>ode</span>
<span class="t" style="left:229.3px;top:35.5px;font-size:13px;line-height:16px;color:#BBBBBB;transform:scaleX(0.9384);">Analy<u>z</u>e</span>
<span class="t" style="left:286.2px;top:35.5px;font-size:13px;line-height:16px;color:#BBBBBB;transform:scaleX(0.9890);"><u>R</u>efactor</span>
<span class="t" style="left:347.2px;top:35.5px;font-size:13px;line-height:16px;color:#BBBBBB;transform:scaleX(0.9647);"><u>B</u>uild</span>
<span class="t" style="left:388.4px;top:35.5px;font-size:13px;line-height:16px;color:#BBBBBB;transform:scaleX(0.9011);">R<u>u</u>n</span>
<span class="t" style="left:422.5px;top:35.5px;font-size:13px;line-height:16px;color:#BBBBBB;transform:scaleX(1.0639);"><u>T</u>ools</span>
<span class="t" style="left:468.1px;top:35.5px;font-size:13px;line-height:16px;color:#BBBBBB;transform:scaleX(0.8528);">VC<u>S</u></span>
<span class="t" style="left:503.1px;top:35.5px;font-size:13px;line-height:16px;color:#BBBBBB;transform:scaleX(1.0162);"><u>W</u>indow</span>
<span class="t" style="left:562.3px;top:35.5px;font-size:13px;line-height:16px;color:#BBBBBB;"><u>H</u>elp</span>
<svg class="abs" style="left:18.8px;top:60.6px;" width="16" height="16" viewBox="0 0 16 16"><path d="M1 1H6.5L8 3H15V8H9V12H1Z" fill="#8E9AA3"/><rect x="10" y="9" width="6.4" height="6.4" fill="#3BB3E0"/></svg>
<span class="t" style="left:38.8px;top:61.0px;font-size:13px;line-height:16px;color:#BBBBBB;font-weight:bold;transform:scaleX(0.9760);">PsychologyManager</span>
<svg class="abs" style="left:166px;top:60px;" width="7" height="18" viewBox="0 0 7 18"><path d="M1 1L5.5 9L1 17" fill="none" stroke="#5E6163" stroke-width="1"/></svg>
<svg class="abs" style="left:175.5px;top:60.5px;" width="16" height="16" viewBox="0 0 16 16"><path d="M1 2H6.5L8 4H15V13H1Z" fill="#8E9AA3"/></svg>
<span class="t" style="left:194.3px;top:61.0px;font-size:13px;line-height:16px;color:#BBBBBB;transform:scaleX(0.9341);">src</span>
<svg class="abs" style="left:215px;top:60px;" width="7" height="18" viewBox="0 0 7 18"><path d="M1 1L5.5 9L1 17" fill="none" stroke="#5E6163" stroke-width="1"/></svg>
<svg class="abs" style="left:224.2px;top:60.5px;" width="16" height="16" viewBox="0 0 16 16"><path d="M1 2H6.5L8 4H15V13H1Z" fill="#8E9AA3"/></svg>
<span class="t" style="left:243.7px;top:61.0px;font-size:13px;line-height:16px;color:#BBBBBB;transform:scaleX(0.9685);">main</span>
<svg class="abs" style="left:275.4px;top:60px;" width="7" height="18" viewBox="0 0 7 18"><path d="M1 1L5.5 9L1 17" fill="none" stroke="#5E6163" stroke-width="1"/></svg>
<svg class="abs" style="left:284.0px;top:60.5px;" width="16" height="16" viewBox="0 0 16 16"><path d="M1 2H6.5L8 4H15V13H1Z" fill="#3A8CB0"/></svg>
<span class="t" style="left:302.9px;top:61.0px;font-size:13px;line-height:16px;color:#BBBBBB;transform:scaleX(0.9346);">java</span>
<svg class="abs" style="left:330px;top:60px;" width="7" height="18" viewBox="0 0 7 18"><path d="M1 1L5.5 9L1 17" fill="none" stroke="#5E6163" stroke-width="1"/></svg>
<svg class="abs" style="left:338.8px;top:60.5px;" width="16" height="16" viewBox="0 0 16 16"><path d="M1 2H6.5L8 4H15V13H1Z" fill="#8E9AA3"/><circle cx="8" cy="8.7" r="1.9" fill="#3C3F41"/></svg>
<span class="t" style="left:358.2px;top:61.0px;font-size:13px;line-height:16px;color:#BBBBBB;">com</span>
<svg class="abs" style="left:387.3px;top:60px;" width="7" height="18" viewBox="0 0 7 18"><path d="M1 1L5.5 9L1 17" fill="none" stroke="#5E6163" stroke-width="1"/></svg>
<svg class="abs" style="left:395.9px;top:60.5px;" width="16" height="16" viewBox="0 0 16 16"><path d="M1 2H6.5L8 4H15V13H1Z" fill="#8E9AA3"/><circle cx="8" cy="8.7" r="1.9" fill="#3C3F41"/></svg>
<span class="t" style="left:415px;top:61.0px;font-size:13px;line-height:16px;color:#BBBBBB;transform:scaleX(0.9804);">yuanlrc</span>
<svg class="abs" style="left:460.6px;top:60px;" width="7" height="18" viewBox="0 0 7 18"><path d="M1 1L5.5 9L1 17" fill="none" stroke="#5E6163" stroke-width="1"/></svg>
<svg class="abs" style="left:469.2px;top:60.5px;" width="16" height="16" viewBox="0 0 16 16"><path d="M1 2H6.5L8 4H15V13H1Z" fill="#8E9AA3"/><circle cx="8" cy="8.7" r="1.9" fill="#3C3F41"/></svg>
<span class="t" style="left:488.3px;top:61.0px;font-size:13px;line-height:16px;color:#BBBBBB;transform:scaleX(0.9715);">base</span>
<svg class="abs" style="left:520.2px;top:60px;" width="7" height="18" viewBox="0 0 7 18"><path d="M1 1L5.5 9L1 17" fill="none" stroke="#5E6163" stroke-width="1"/></svg>
<svg class="abs" style="left:529.0px;top:60.5px;" width="16" height="16" viewBox="0 0 16 16"><path d="M1 2H6.5L8 4H15V13H1Z" fill="#8E9AA3"/><circle cx="8" cy="8.7" r="1.9" fill="#3C3F41"/></svg>
<span class="t" style="left:548.1px;top:61.0px;font-size:13px;line-height:16px;color:#BBBBBB;transform:scaleX(1.0436);">controller</span>
<svg class="abs" style="left:608.3px;top:60px;" width="7" height="18" viewBox="0 0 7 18"><path d="M1 1L5.5 9L1 17" fill="none" stroke="#5E6163" stroke-width="1"/></svg>
<svg class="abs" style="left:617.1px;top:60.5px;" width="16" height="16" viewBox="0 0 16 16"><path d="M1 2H6.5L8 4H15V13H1Z" fill="#8E9AA3"/><circle cx="8" cy="8.7" r="1.9" fill="#3C3F41"/></svg>
<span class="t" style="left:636px;top:61.0px;font-size:13px;line-height:16px;color:#BBBBBB;transform:scaleX(1.0135);">admin</span>
<svg class="abs" style="left:676.3px;top:60px;" width="7" height="18" viewBox="0 0 7 18"><path d="M1 1L5.5 9L1 17" fill="none" stroke="#5E6163" stroke-width="1"/></svg>
<svg class="abs" style="left:684.8px;top:60.5px;" width="16" height="16" viewBox="0 0 16 16"><circle cx="8" cy="8" r="7.1" fill="#3E8CAB"/><path d="M10.2 9.5A2.6 2.6 0 1 1 10.2 6.5" fill="none" stroke="#274756" stroke-width="1.3"/></svg>
<span class="t" style="left:704.3px;top:61.0px;font-size:13px;line-height:16px;color:#BBBBBB;transform:scaleX(1.0082);">QuestionTypeController</span>
<svg class="abs" style="left:1633px;top:62.5px;" width="14" height="13" viewBox="0 0 14 13"><rect x="0.5" y="0.5" width="13" height="12" fill="none" stroke="#AFB1B3" stroke-width="1"/><rect x="0.5" y="0.5" width="13" height="2.2" fill="#AFB1B3"/><path d="M3.2 4.8L7.6 7.5L3.2 10.2Z" fill="#499C54"/></svg>
<svg class="abs" style="left:1657px;top:61px;" width="18" height="16" viewBox="0 0 18 16"><g fill="#499C54"><rect x="0.5" y="2.2" width="10.2" height="3.3" transform="rotate(-32 5.6 3.85)"/><path d="M6.5 6.1L8.9 4L16.4 13L14 15.1Z"/></g></svg>
<div class="abs" style="left:1685px;top:58px;width:75px;height:22px;border:1px solid #5E6060;border-radius:3px"></div>
<svg class="abs" style="left:1692px;top:61px;" width="18" height="18" viewBox="0 0 18 18"><path d="M1.2 12Q0 4.6 7 2.7Q11.5 2 14 0.6Q15.6 7.5 11 11.5Q6 15 2.6 12.8L1.8 14.4Z" fill="#5FAD45"/><path d="M11.6 7.6L15.6 9.9V14.5L11.6 16.8L7.6 14.5V9.9Z" fill="#9AA7B0"/><path d="M10.2 10.4A2.2 2.2 0 1 0 13 10.4M11.6 9.6V12.4" stroke="#3C3F41" stroke-width="1" fill="none"/></svg>
<span class="t" style="left:1711.8px;top:61.5px;font-size:13px;line-height:16px;color:#BBBBBB;transform:scaleX(1.0155);">App</span>
<svg class="abs" style="left:1743.5px;top:66.3px;" width="9" height="6" viewBox="0 0 9 6"><path d="M0 0.2H9L4.5 5.8Z" fill="#AFB1B3"/></svg>
<svg class="abs" style="left:1773px;top:62px;" width="12" height="14" viewBox="0 0 12 14"><path d="M1 0.5L11.5 7L1 13.5Z" fill="#499C54"/></svg>
<svg class="abs" style="left:1796px;top:61px;" width="16" height="16" viewBox="0 0 16 16"><path d="M4.2 1.2L6 3.4M11.8 1.2L10 3.4" stroke="#499C54" stroke-width="1.3"/><ellipse cx="8" cy="9" rx="4.2" ry="5.6" fill="#499C54"/><path d="M1 6.5H15M1 9.5H15M1.5 12.8H14.5" stroke="#499C54" stroke-width="1.3"/><path d="M5 7H11M5 10H11" stroke="#3C3F41" stroke-width="1"/></svg>
<svg class="abs" style="left:1822px;top:61px;" width="18" height="17" viewBox="0 0 18 17"><path d="M1 2L6.5 0.6L11 2V5H7V11L6.5 13Q1.5 10.5 1 6Z" fill="#AFB1B3"/><path d="M6.5 2.4V11" stroke="#3C3F41" stroke-width="1.6"/><path d="M9 7.5L16.5 12L9 16.5Z" fill="#499C54"/></svg>
<svg class="abs" style="left:1851px;top:64px;" width="10" height="10" viewBox="0 0 10 10"><rect width="10" height="10" fill="#5A5D5E"/></svg>
<div class="abs" style="left:1872px;top:59px;width:1px;height:20px;background:#555759"></div>
<svg class="abs" style="left:1881px;top:61px;" width="16" height="16" viewBox="0 0 16 16"><circle cx="6.3" cy="6.3" r="4.7" fill="none" stroke="#AFB1B3" stroke-width="1.9"/><path d="M9.8 9.8L14.6 14.6" stroke="#AFB1B3" stroke-width="2.2"/></svg>
<svg class="abs" style="left:1907px;top:61px;" width="17" height="16" viewBox="0 0 17 16"><path d="M0.5 1.5H5.5L7 3.5H14V7.5H8.5V12.5H0.5Z" fill="#AFB1B3"/><rect x="9.7" y="8.8" width="2.7" height="2.7" fill="#3A9BD6"/><rect x="13.1" y="8.8" width="2.7" height="2.7" fill="#3A9BD6"/><rect x="9.7" y="12.2" width="2.7" height="2.7" fill="#3A9BD6"/><rect x="13.1" y="12.2" width="2.7" height="2.7" fill="#3A9BD6"/></svg>
<div class="abs" style="left:10px;top:84px;width:21px;height:86px;background:#2C2E2F"></div>
<span class="t" style="left:15px;top:142.0px;font-size:12px;line-height:16px;color:#E6E6E6;transform:rotate(-90deg) scaleX(0.9763);transform-origin:0 0;"><u>1</u>: Project</span>
<svg class="abs" style="left:15.5px;top:147.5px;" width="12" height="10" viewBox="0 0 12 10"><path d="M0 0H5L6.3 1.8H12V10H0Z" fill="#AFB1B3"/></svg>
<span class="t" style="left:15.5px;top:819.0px;font-size:12px;line-height:16px;color:#BBBBBB;transform:rotate(-90deg) scaleX(0.9834);transform-origin:0 0;"><u>7</u>: Structure</span>
<svg class="abs" style="left:16px;top:824px;" width="12" height="10" viewBox="0 0 12 10"><rect x="0" y="5.5" width="4.5" height="4.5" fill="#AFB1B3"/><rect x="6.5" y="5.5" width="4.5" height="4.5" fill="#AFB1B3"/><rect x="6.5" y="0" width="4.5" height="4.5" fill="#AFB1B3"/></svg>
<span class="t" style="left:15.5px;top:918.0px;font-size:12px;line-height:16px;color:#BBBBBB;transform:rotate(-90deg) scaleX(0.9489);transform-origin:0 0;"><u>2</u>: Favorites</span>
<svg class="abs" style="left:15.5px;top:923px;" width="13" height="13" viewBox="0 0 13 13"><path d="M6.5 0.3L8.4 4.6L13 5L9.5 8.1L10.6 12.7L6.5 10.2L2.4 12.7L3.5 8.1L0 5L4.6 4.6Z" fill="#AFB1B3"/></svg>
<span class="t" style="left:15.5px;top:979.5px;font-size:12px;line-height:16px;color:#BBBBBB;transform:rotate(-90deg) scaleX(0.9808);transform-origin:0 0;">Web</span>
<svg class="abs" style="left:15.5px;top:983px;" width="13" height="13" viewBox="0 0 13 13"><circle cx="6.5" cy="6.5" r="6" fill="#AFB1B3"/><path d="M2.2 3.6Q4.2 4 4.8 2.4Q6 3.6 5 5.2Q3.4 6.4 2 5.6Z M6.6 7Q9 6.4 9.6 8.2Q9 10.6 7.4 11.4Q6.6 9.6 5.6 8.6Z M8.6 1.6Q10.4 2.6 11.4 4.4Q10 4.8 9 3.8Z" fill="#3C3F41"/></svg>
<svg class="abs" style="left:1913px;top:93.5px;" width="13" height="13" viewBox="0 0 13 13"><circle cx="6.5" cy="2.2" r="1.5" fill="#AFB1B3"/><ellipse cx="6.5" cy="5.3" rx="1.6" ry="1.9" fill="#AFB1B3"/><circle cx="6.5" cy="9.8" r="2.7" fill="#AFB1B3"/><path d="M5 4.5L1.8 1.5M8 4.5L11.2 1.5M4.8 6H1.2M8.2 6H11.8M5 7.2Q1.6 8 1.4 12.4M8 7.2Q11.4 8 11.6 12.4" stroke="#AFB1B3" stroke-width="1.1" fill="none"/></svg>
<span class="t" style="left:1925.7px;top:111.0px;font-size:12px;line-height:16px;color:#BBBBBB;transform:rotate(90deg) scaleX(1.0098);transform-origin:0 0;">Ant Build</span>
<span class="t" style="left:1912px;top:178.0px;font-size:17px;line-height:16px;color:#AFB1B3;font-weight:bold;transform:scaleX(0.8595);font-style:italic;">m</span>
<span class="t" style="left:1925.7px;top:198.5px;font-size:12px;line-height:16px;color:#BBBBBB;transform:rotate(90deg) scaleX(0.9714);transform-origin:0 0;">Maven</span>
<svg class="abs" style="left:1913px;top:254px;" width="13" height="13" viewBox="0 0 13 13"><ellipse cx="6.5" cy="2.6" rx="5.5" ry="2.2" fill="#AFB1B3"/><path d="M1 4.4Q6.5 7.4 12 4.4V6.2Q6.5 9.2 1 6.2Z M1 7.4Q6.5 10.4 12 7.4V9.2Q6.5 12.2 1 9.2Z M1 10.4Q6.5 13.4 12 10.4V11Q6.5 14.5 1 11Z" fill="#AFB1B3"/></svg>
<span class="t" style="left:1925.7px;top:271.5px;font-size:12px;line-height:16px;color:#BBBBBB;transform:rotate(90deg) scaleX(0.9382);transform-origin:0 0;">Database</span>
<svg class="abs" style="left:1913px;top:343px;" width="13" height="13" viewBox="0 0 13 13"><path d="M1 7A5.7 5.7 0 0 1 11 3.2L6.5 8Z" fill="#AFB1B3"/><path d="M4 9.5L6.2 11.8L11.8 5.5" fill="none" stroke="#AFB1B3" stroke-width="1.8"/></svg>
<span class="t" style="left:1925.7px;top:359.5px;font-size:12px;line-height:16px;color:#BBBBBB;transform:rotate(90deg) scaleX(0.9737);transform-origin:0 0;">Bean Validation</span>
<svg class="abs" style="left:42px;top:90px;" width="14" height="13" viewBox="0 0 14 13"><rect x="0" y="0" width="14" height="13" fill="#6F7C86"/><rect x="1" y="1" width="12" height="2" fill="#9AA7B0"/><rect x="2" y="4" width="10" height="7" fill="#3A87A8"/></svg>
<span class="t" style="left:61.4px;top:88.5px;font-size:13px;line-height:16px;color:#BBBBBB;transform:scaleX(0.9884);">Project</span>
<svg class="abs" style="left:109.5px;top:93.5px;" width="9" height="6" viewBox="0 0 9 6"><path d="M0 0.5H9L4.5 5.5Z" fill="#AFB1B3"/></svg>
<svg class="abs" style="left:412.5px;top:89px;" width="15" height="15" viewBox="0 0 15 15"><circle cx="7.5" cy="7.5" r="6.2" fill="none" stroke="#AFB1B3" stroke-width="1.6"/><path d="M7.5 1V5.2M7.5 9.8V14M1 7.5H5.2M9.8 7.5H14" stroke="#AFB1B3" stroke-width="1.6"/></svg>
<svg class="abs" style="left:439.5px;top:89.5px;" width="13" height="14" viewBox="0 0 13 14"><path d="M0 6.2H13V7.8H0Z M3 0.5H10L6.5 4.8Z M3 13.5H10L6.5 9.2Z" fill="#AFB1B3"/></svg>
<div class="abs" style="left:462px;top:86px;width:1px;height:20px;background:#515355"></div>
<svg class="abs" style="left:472px;top:89.5px;" width="14" height="14" viewBox="0 0 14 14"><path d="M5.8 0H8.2L8.6 2.1L10 2.7L11.8 1.5L13.5 3.2L12.3 5L12.9 6.4L15 6.8V7.2H14V8.2L12.9 8.6L12.3 10L13.5 11.8L11.8 13.5L10 12.3L8.6 12.9L8.2 14H5.8L5.4 12.9L4 12.3L2.2 13.5L0.5 11.8L1.7 10L1.1 8.6L0 8.2V5.8L1.1 5.4L1.7 4L0.5 2.2L2.2 0.5L4 1.7L5.4 1.1Z" fill="#AFB1B3"/><circle cx="7" cy="7" r="2.3" fill="#3C3F41"/></svg>
<div class="abs" style="left:499px;top:95px;width:12px;height:2px;background:#AFB1B3"></div>
<div class="abs" style="left:692.3px;top:84px;width:1px;height:24px;background:#323232"></div>
<svg class="abs" style="left:528.2px;top:88.5px;" width="16" height="16" viewBox="0 0 16 16"><circle cx="8" cy="8" r="7.1" fill="#3E8CAB"/><path d="M10.2 9.5A2.6 2.6 0 1 1 10.2 6.5" fill="none" stroke="#274756" stroke-width="1.3"/></svg>
<span class="t" style="left:547.3px;top:89.0px;font-size:13px;line-height:16px;color:#BBBBBB;transform:scaleX(1.0157);">DoctorController.java</span>
<svg class="abs" style="left:678.3px;top:92.5px;" width="8" height="8" viewBox="0 0 8 8"><path d="M0.7 0.7L7.3 7.3M7.3 0.7L0.7 7.3" stroke="#7A7D7F" stroke-width="1.1"/></svg>
<div class="abs" style="left:864.4px;top:84px;width:1px;height:24px;background:#323232"></div>
<svg class="abs" style="left:701.7px;top:88.5px;" width="16" height="16" viewBox="0 0 16 16"><circle cx="8" cy="8" r="7.1" fill="#3E8CAB"/><path d="M10.2 9.5A2.6 2.6 0 1 1 10.2 6.5" fill="none" stroke="#274756" stroke-width="1.3"/></svg>
<span class="t" style="left:720.9px;top:89.0px;font-size:13px;line-height:16px;color:#BBBBBB;transform:scaleX(1.0146);">NoticeController.java</span>
<svg class="abs" style="left:850px;top:92.5px;" width="8" height="8" viewBox="0 0 8 8"><path d="M0.7 0.7L7.3 7.3M7.3 0.7L0.7 7.3" stroke="#7A7D7F" stroke-width="1.1"/></svg>
<div class="abs" style="left:1036.5px;top:84px;width:1px;height:24px;background:#323232"></div>
<svg class="abs" style="left:874.2px;top:88.5px;" width="16" height="16" viewBox="0 0 16 16"><circle cx="8" cy="8" r="7.1" fill="#3E8CAB"/><path d="M10.2 9.5A2.6 2.6 0 1 1 10.2 6.5" fill="none" stroke="#274756" stroke-width="1.3"/></svg>
<span class="t" style="left:892.9px;top:89.0px;font-size:13px;line-height:16px;color:#BBBBBB;transform:scaleX(0.9882);">PhTestController.java</span>
<svg class="abs" style="left:1022px;top:92.5px;" width="8" height="8" viewBox="0 0 8 8"><path d="M0.7 0.7L7.3 7.3M7.3 0.7L0.7 7.3" stroke="#7A7D7F" stroke-width="1.1"/></svg>
<div class="abs" style="left:1222.5px;top:84px;width:1px;height:24px;background:#323232"></div>
<svg class="abs" style="left:1046.2px;top:88.5px;" width="16" height="16" viewBox="0 0 16 16"><circle cx="8" cy="8" r="7.1" fill="#3E8CAB"/><path d="M10.2 9.5A2.6 2.6 0 1 1 10.2 6.5" fill="none" stroke="#274756" stroke-width="1.3"/></svg>
<span class="t" style="left:1065.5px;top:89.0px;font-size:13px;line-height:16px;color:#BBBBBB;transform:scaleX(0.9975);">QuestionController.java</span>
<svg class="abs" style="left:1208px;top:92.5px;" width="8" height="8" viewBox="0 0 8 8"><path d="M0.7 0.7L7.3 7.3M7.3 0.7L0.7 7.3" stroke="#7A7D7F" stroke-width="1.1"/></svg>
<div class="abs" style="left:1223.5px;top:84px;width:213.70000000000005px;height:24.5px;background:#4E5254;border-bottom:3px solid #4A9CC8"></div>
<svg class="abs" style="left:1232.2px;top:88.5px;" width="16" height="16" viewBox="0 0 16 16"><circle cx="8" cy="8" r="7.1" fill="#3E8CAB"/><path d="M10.2 9.5A2.6 2.6 0 1 1 10.2 6.5" fill="none" stroke="#274756" stroke-width="1.3"/></svg>
<span class="t" style="left:1251.5px;top:89.0px;font-size:13px;line-height:16px;color:#C8CCD0;">QuestionTypeController.java</span>
<svg class="abs" style="left:1422px;top:92.5px;" width="8" height="8" viewBox="0 0 8 8"><path d="M0.7 0.7L7.3 7.3M7.3 0.7L0.7 7.3" stroke="#7A7D7F" stroke-width="1.1"/></svg>
<span class="t" style="left:611.5px;top:986.5px;font-size:13px;line-height:16px;color:#BBBBBB;transform:scaleX(1.0067);">QuestionTypeController</span>
<svg class="abs" style="left:43.5px;top:1014px;" width="11" height="9" viewBox="0 0 11 9"><path d="M0 0.2H2V1.8H0Z M3.3 0.2H10.5V1.8H3.3Z M0 3.7H2V5.3H0Z M3.3 3.7H10.5V5.3H3.3Z M0 7.2H2V8.8H0Z M3.3 7.2H10.5V8.8H3.3Z" fill="#AFB1B3"/></svg>
<span class="t" style="left:59.2px;top:1011.3px;font-size:12px;line-height:16px;color:#BBBBBB;transform:scaleX(0.9164);"><u>6</u>: TODO</span>
<svg class="abs" style="left:124px;top:1012.5px;" width="13" height="12" viewBox="0 0 13 12"><path d="M0.5 9Q0 3 7 2Q10.5 1.6 12.3 0Q13.6 7 9 9.6Q4.5 11.8 1.8 10.3L1 11.8Z" fill="#AFB1B3"/></svg>
<span class="t" style="left:141.1px;top:1011.3px;font-size:12px;line-height:16px;color:#BBBBBB;transform:scaleX(0.9744);">Spring</span>
<svg class="abs" style="left:195.5px;top:1013px;" width="12" height="10" viewBox="0 0 12 10"><rect width="12" height="10" fill="#AFB1B3"/><path d="M2 2.3L4.8 4.8L2 7.3M5.8 7.6H9.6" stroke="#3C3F41" stroke-width="1.2" fill="none"/></svg>
<span class="t" style="left:212.4px;top:1011.3px;font-size:12px;line-height:16px;color:#BBBBBB;transform:scaleX(0.9722);">Terminal</span>
<svg class="abs" style="left:280px;top:1013px;" width="12" height="12" viewBox="0 0 12 12"><path d="M0 0H10V3H2.5V9H0Z" fill="#AFB1B3"/><rect x="3.8" y="4.2" width="8.2" height="7.8" fill="#AFB1B3"/><path d="M5.3 6H7.2M8.6 6H10.5M5.3 8.1H7.2M8.6 8.1H10.5M5.3 10.2H7.2M8.6 10.2H10.5" stroke="#3C3F41" stroke-width="1"/></svg>
<span class="t" style="left:295.9px;top:1011.3px;font-size:12px;line-height:16px;color:#BBBBBB;transform:scaleX(0.9259);">Java Enterprise</span>
<div class="abs" style="left:1829px;top:1012.5px;width:12.5px;height:12.5px;border-radius:50%;background:#499C54"></div>
<span class="t" style="left:1833px;top:1010.5px;font-size:10px;line-height:16px;color:#fff;font-weight:bold;">1</span>
<span class="t" style="left:1846.5px;top:1011.3px;font-size:12px;line-height:16px;color:#BBBBBB;transform:scaleX(0.9436);">Event Log</span>
<svg class="abs" style="left:20px;top:1034px;" width="12" height="12" viewBox="0 0 12 12"><path d="M2.5 0.5H11.5V9.5H2.5Z M0.5 2.5V11.5H9.5" fill="none" stroke="#AFB1B3" stroke-width="1"/></svg>
<span class="t" style="left:41.8px;top:1032.4px;font-size:13px;line-height:16px;color:#BBBBBB;">IDE and Plugin Updates: IntelliJ IDEA is ready to update. (4 minutes ago)</span>
<span class="t" style="left:1690.2px;top:1032.4px;font-size:13px;line-height:16px;color:#BBBBBB;transform:scaleX(0.9402);">29:14</span>
<span class="t" style="left:1732.3px;top:1032.4px;font-size:13px;line-height:16px;color:#BBBBBB;transform:scaleX(0.8276);">CRLF</span>
<span class="t" style="left:1781.3px;top:1032.4px;font-size:13px;line-height:16px;color:#BBBBBB;transform:scaleX(0.9147);">UTF-8</span>
<span class="t" style="left:1836.5px;top:1032.4px;font-size:13px;line-height:16px;color:#BBBBBB;transform:scaleX(1.0180);">Tab*</span>
<svg class="abs" style="left:1764.5px;top:1035px;" width="6" height="11" viewBox="0 0 6 11"><path d="M0.3 4L3 0.5L5.7 4Z M0.3 6.5L3 10L5.7 6.5Z" fill="#8C8E90"/></svg>
<svg class="abs" style="left:1819.5px;top:1035px;" width="6" height="11" viewBox="0 0 6 11"><path d="M0.3 4L3 0.5L5.7 4Z M0.3 6.5L3 10L5.7 6.5Z" fill="#8C8E90"/></svg>
<svg class="abs" style="left:1867.5px;top:1035px;" width="6" height="11" viewBox="0 0 6 11"><path d="M0.3 4L3 0.5L5.7 4Z M0.3 6.5L3 10L5.7 6.5Z" fill="#8C8E90"/></svg>
<svg class="abs" style="left:1884.5px;top:1033px;" width="12" height="13" viewBox="0 0 12 13"><path d="M1.1 5.9V4.3A2.4 2.4 0 0 1 5.9 4.3V6.2" fill="none" stroke="#AFB1B3" stroke-width="1.6"/><rect x="3.4" y="6" width="8.1" height="6.2" fill="#AFB1B3"/></svg>
<svg class="abs" style="left:1909px;top:1033px;" width="13" height="14" viewBox="0 0 13 14"><path d="M3 5.5V3.2Q3 0.8 6.5 0.8Q10 0.8 10 3.2V5.5M0.5 5.5H12.5M2.5 6Q1.3 9 4 11.6M10.5 6Q11.7 9 9 11.6M4.2 7.7H5.8M7.2 7.7H8.8M4.2 10.6Q6.5 8 8.8 10.6M2.3 13.2H10.7M6.5 2V3.4" fill="none" stroke="#9A9DA0" stroke-width="1"/></svg>
</div></div>
</body></html>
